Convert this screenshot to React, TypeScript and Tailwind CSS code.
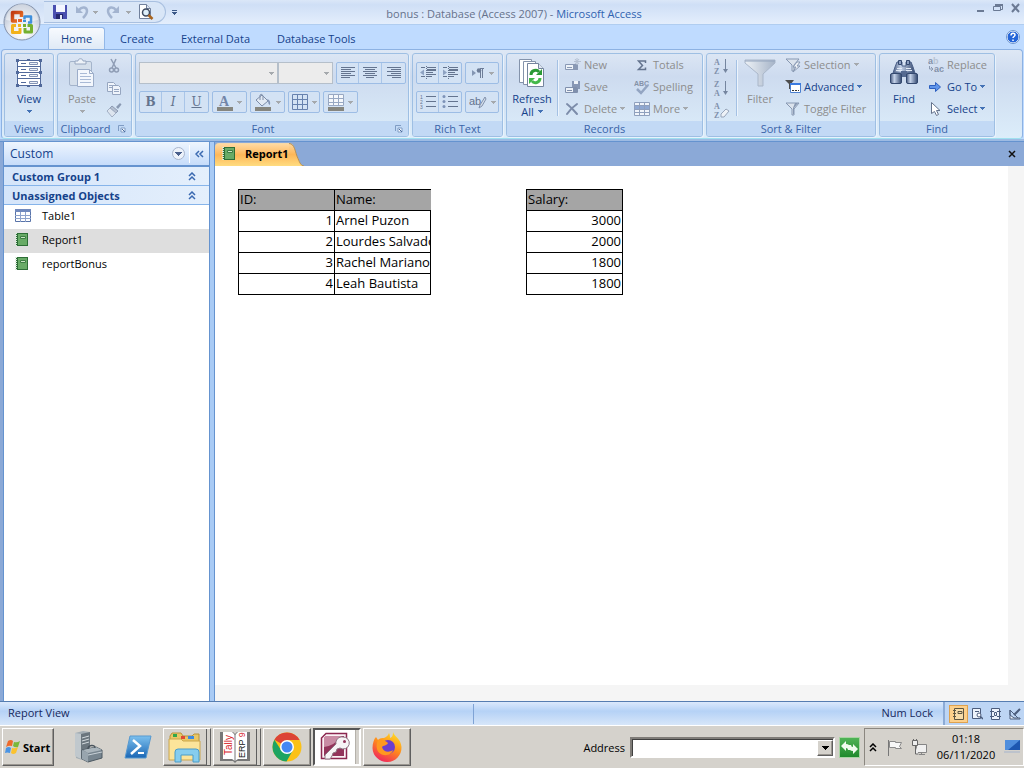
import React from 'react';
import clsx from 'clsx';

type IconProps = { className?: string };

const Caret: React.FC<IconProps> = ({ className = 'text-[#a5a9ad]' }) => (
    <svg width="5" height="3" viewBox="0 0 5 3" className={clsx('shrink-0', className)}>
        <path d="M0 0h5v1H4v1H3v1H2V2H1V1H0z" fill="currentColor" />
    </svg>
);

const WideCaret: React.FC<IconProps> = ({ className }) => (
    <svg width="7" height="4" viewBox="0 0 7 4" className={className}>
        <path d="M0 0h7v1H6v1H5v1H4v1H3V3H2V2H1V1H0z" fill="currentColor" />
    </svg>
);

/* ---------- Quick access icons ---------- */

const OfficeOrb = () => (
    <svg width="38" height="38" viewBox="0 0 38 38">
        <defs>
            <radialGradient id="orb" cx=".5" cy=".8" r=".8">
                <stop offset="0" stopColor="#ffffff" />
                <stop offset=".5" stopColor="#e2e6ee" />
                <stop offset="1" stopColor="#a3afc3" />
            </radialGradient>
            <linearGradient id="orbRed" x2="1" y2="1">
                <stop offset="0" stopColor="#c03a12" />
                <stop offset="1" stopColor="#f07a2a" />
            </linearGradient>
        </defs>
        <circle cx="19" cy="19" r="18" fill="url(#orb)" stroke="#8492ab" />
        <path d="M3 17a16 16 0 0 1 32 0q-16 4-32 0z" fill="#fff" opacity=".45" />
        <g fill="none" strokeLinejoin="round">
            <path d="M14 18H9.500V9.500h9V14" stroke="url(#orbRed)" strokeWidth="3.500" />
            <path d="M21.500 16.500v-3h6.500v6h-3" stroke="#3f8fdc" strokeWidth="2.500" />
            <path d="M13 22.500H9.500v7h7.500V25" stroke="#f2b21c" strokeWidth="3" />
            <path d="M24.500 22.500h4v6.500h-6.500V25" stroke="#74b030" strokeWidth="3" />
        </g>
        <path d="M15 16h4v3h-4z" fill="#e8642a" />
        <path d="M20 17h3v2h-3z" fill="#3f8fdc" />
        <path d="M15 21h3v3h-3z" fill="#f2b21c" />
        <path d="M20 21h3v3h-3z" fill="#74b030" />
    </svg>
);

const SaveDisk = () => (
    <svg width="14" height="14" viewBox="0 0 14 14">
        <path d="M0 0h14v14H1l-1-1z" fill="#4a4fb0" />
        <path d="M3 0h9v7H3z" fill="#f4f6ff" />
        <path d="M3 9h7v5H3z" fill="#25286e" />
        <path d="M7 10h2v4H7z" fill="#e8eaf8" />
    </svg>
);

const Undo: React.FC<IconProps> = ({ className }) => (
    <svg width="14" height="14" viewBox="0 0 14 14" className={className}>
        <path d="M1 1v7h7z" fill="#a3b4d0" />
        <path d="M4 5c3-4 8-3 8 1 0 3-2 5-4 7" fill="none" stroke="#a3b4d0" strokeWidth="2.500" />
    </svg>
);

const PrintPreview = () => (
    <svg width="16" height="16" viewBox="0 0 16 16">
        <path d="M1.500.500h7l4 4v10h-11z" fill="#fff" stroke="#70809c" />
        <path d="M8.500.500v4h4" fill="#dce4f0" stroke="#70809c" />
        <circle cx="8" cy="8.500" r="3.500" fill="#dff0fa" stroke="#3e4a60" strokeWidth="1.500" />
        <path d="M10.500 11l4 4" stroke="#a8641e" strokeWidth="2.500" />
    </svg>
);

/* ---------- Ribbon icons ---------- */

const ViewIcon = () => (
    <svg width="26" height="28" viewBox="0 0 26 28">
        <path d="M1.500 1.500h23v25h-23z" fill="#fff" stroke="#51699a" />
        <path d="M1 7.500h24M1 13.500h24M1 19.500h24" stroke="#51699a" />
        <path d="M5 4.500h5M5 10.500h5M5 16.500h5M5 23.500h5" stroke="#51699a" />
        <path d="M13.500 3.500h8v2h-8zM13.500 9.500h8v2h-8zM13.500 15.500h8v2h-8zM13.500 22.500h8v2h-8z" fill="#eef3fa" stroke="#8393b4" />
        <path d="M0 0h3v3H0zM11 0h3v2h-3zM23 0h3v3h-3zM0 12h3v3H0zM23 12h3v3h-3zM0 25h3v3H0zM11 26h3v2h-3zM23 25h3v3h-3z" fill="#51699a" />
    </svg>
);

const PasteIcon = () => (
    <svg width="28" height="30" viewBox="0 0 28 30">
        <rect x="1.500" y="3.500" width="22" height="24" rx="1.500" fill="#d5dfeb" stroke="#a4b4cb" />
        <path d="M7 6V3h3c0-3 5-3 5 0h3v3z" fill="#edf2f8" stroke="#96a6bf" />
        <path d="M9.500 11.500h12l4 4v13h-16z" fill="#f3f7fd" stroke="#9cadc9" />
        <path d="M12 15.500h7M12 18.500h11M12 21.500h11M12 24.500h11" stroke="#a9bad6" />
        <path d="M21.500 11.500v4h4" fill="none" stroke="#9cadc9" />
    </svg>
);

const CutIcon = () => (
    <svg width="16" height="16" viewBox="0 0 16 16" fill="none" stroke="#8f9db5" strokeWidth="1.500">
        <path d="M5 1l5 9M10 1L6 10" />
        <circle cx="5.500" cy="12" r="2" />
        <circle cx="10.500" cy="12" r="2" />
    </svg>
);

const CopyIcon = () => (
    <svg width="16" height="16" viewBox="0 0 16 16" fill="#eff4fb" stroke="#96a6c0">
        <path d="M1.500 2.500h6l2 2v7h-8z" />
        <path d="M3 5.500h4M3 7.500h4" />
        <path d="M6.500 5.500h6l2 2v7h-8z" />
        <path d="M8 9.500h5M8 11.500h5" />
    </svg>
);

const BrushIcon = () => (
    <svg width="16" height="16" viewBox="0 0 16 16">
        <path d="M10 5l4-4 1.500 1.500L12 7z" fill="#8999b2" />
        <path d="M6 4l6 5-2 2-6-5z" fill="#b5c0d1" stroke="#8d9bb3" />
        <path d="M4 6l6 5-4 4-5-6z" fill="#dde5ef" stroke="#a2afc4" />
    </svg>
);

const lineSets = {
    left: 'M1 1.500h14M1 3.500h10M1 5.500h14M1 7.500h10M1 9.500h14M1 11.500h9',
    center: 'M1 1.500h14M3 3.500h10M1 5.500h14M3 7.500h10M1 9.500h14M4 11.500h8',
    right: 'M1 1.500h14M5 3.500h10M1 5.500h14M5 7.500h10M1 9.500h14M6 11.500h9',
};

const AlignIcon: React.FC<{ side: keyof typeof lineSets }> = ({ side }) => (
    <svg width="16" height="14" viewBox="0 0 16 14">
        <path d={lineSets[side]} stroke="#64748f" />
    </svg>
);

const IndentIcon: React.FC<{ out?: boolean }> = ({ out }) => (
    <svg width="16" height="14" viewBox="0 0 16 14">
        <path d="M1 1.500h4M7 1.500h9M7 3.500h9M7 4.500h9M7 6.500h6M7 8.500h9M1 10.500h4M7 10.500h5" stroke="#64748f" />
        <path d="M6.500 0v14" stroke="#64748f" strokeDasharray="1 1" />
        <path d={out ? 'M0 6.500l4-3v6z' : 'M5 6.500l-4-3v6z'} fill="#8ea2c2" />
    </svg>
);

const ListIcon: React.FC<{ numbered?: boolean }> = ({ numbered }) => (
    <svg width="16" height="16" viewBox="0 0 16 16">
        {[2, 7, 12].map((y, i) =>
            numbered ? (
                <text key={y} x="0" y={y + 3} fontSize="5" fontFamily="Liberation Sans" fill="#64748f">{i + 1}</text>
            ) : (
                <circle key={y} cx="2" cy={y + 0.5} r="1.500" fill="#7d92b8" />
            )
        )}
        <path d="M6 2.500h10M6 7.500h10M6 12.500h10" stroke="#64748f" />
    </svg>
);

const DirectionIcon = () => (
    <svg width="14" height="12" viewBox="0 0 14 12">
        <path d="M1 3l4 3-4 3z" fill="#8496b3" />
        <path d="M13 1.500H9M9.500 1v10M11.500 1v10" stroke="#6d7d98" />
        <circle cx="8" cy="3.500" r="2.300" fill="#6d7d98" />
    </svg>
);

const HighlightIcon = () => (
    <svg width="18" height="16" viewBox="0 0 18 16">
        <text x="0" y="11" fontSize="11" fontFamily="Liberation Sans" fill="#64748f">ab</text>
        <path d="M16 3l-5 8-1 3 3-2 4-7z" fill="#d4deeb" stroke="#8191ac" />
    </svg>
);

const FillIcon = () => (
    <svg width="18" height="18" viewBox="0 0 18 18">
        <path d="M8 2l6 6-6 5-6-6z" fill="#e2eaf4" stroke="#7c8ca8" />
        <path d="M6 7V2q2-2 3 1v4" fill="none" stroke="#7c8ca8" />
        <path d="M13 6q4 1 3 6-2-1-2-4z" fill="#8295b5" />
        <path d="M1 14h16v4H1z" fill="#86867f" />
    </svg>
);

const FontColorIcon = () => (
    <svg width="16" height="18" viewBox="0 0 16 18">
        <text x="2" y="13" fontSize="14" fontWeight="700" fontFamily="Liberation Serif" fill="#7285a8">A</text>
        <path d="M0 14h16v4H0z" fill="#86867f" />
    </svg>
);

const GridIcon = () => (
    <svg width="16" height="16" viewBox="0 0 16 16">
        <path d="M.500.500h15v15H.500zM.500 5.500h15M.500 10.500h15M5.500.500v15M10.500.500v15" fill="none" stroke="#6681ae" />
    </svg>
);

const AltRowIcon = () => (
    <svg width="16" height="18" viewBox="0 0 16 18">
        <path d="M.500 1.500h15v11H.500z" fill="#f5f8fc" stroke="#98a8c3" />
        <path d="M0 5.500h16M0 9.500h16M5.500 1v12M10.500 1v12" stroke="#98a8c3" />
        <path d="M0 14h16v4H0z" fill="#86867f" />
    </svg>
);

const RefreshIcon = () => (
    <svg width="28" height="30" viewBox="0 0 28 30">
        <path d="M1.500 1.500h12v23h-12z" fill="#fff" stroke="#8493ab" />
        <path d="M5.500 3.500h12v23h-12z" fill="#fff" stroke="#8493ab" />
        <path d="M9.500 5.500h11l5 5v18h-16z" fill="#fff" stroke="#75859f" />
        <path d="M20.500 5.500v5h5" fill="#dfe7f1" stroke="#75859f" />
        <path d="M13 17c0-5 6-6 8-3" fill="none" stroke="#2a9a35" strokeWidth="3" />
        <path d="M24 11v6h-6z" fill="#2a9a35" />
        <path d="M22 20c0 5-6 6-8 3" fill="none" stroke="#43b84a" strokeWidth="3" />
        <path d="M11 26v-6h6z" fill="#43b84a" />
    </svg>
);

const NewIcon = () => (
    <svg width="16" height="16" viewBox="0 0 16 16">
        <path d="M.500 7.500h12v5H.500z" fill="#edf2f8" stroke="#8999b5" />
        <path d="M2 10.500h5" stroke="#8999b5" />
        <path d="M8 8h5v5H8z" fill="#8999b5" />
        <path d="M12 1v7M9 4.500h7M10 2l4 5M14 2l-4 5" stroke="#b4c0d2" />
    </svg>
);

const SaveRecordIcon = () => (
    <svg width="16" height="16" viewBox="0 0 16 16">
        <path d="M7 2h8v8H7z" fill="#8797b5" />
        <path d="M9 2h4v3H9z" fill="#eef3f9" />
        <path d="M.500 8.500h12v5H.500z" fill="#edf2f8" stroke="#8090ad" />
        <path d="M2 11.500h5" stroke="#8090ad" />
        <path d="M8 9h4v4H8z" fill="#8090ad" />
    </svg>
);

const DeleteIcon = () => (
    <svg width="16" height="16" viewBox="0 0 16 16">
        <path d="M2 3q5 4 10 10M12 3Q6 7 2 13" fill="none" stroke="#7d8daa" strokeWidth="2" strokeLinecap="round" />
    </svg>
);

const SigmaIcon = () => (
    <svg width="16" height="16" viewBox="0 0 16 16">
        <path d="M11.500 6V4H4.500L8.500 8.500l-4 4h7v-2" fill="none" stroke="#64748f" strokeWidth="1.500" />
    </svg>
);

const SpellingIcon = () => (
    <svg width="16" height="16" viewBox="0 0 16 16">
        <text x="0" y="7" fontSize="7" fontWeight="700" fontFamily="Liberation Sans" fill="#8592a8">ABC</text>
        <path d="M3 10l4 4 7-8" fill="none" stroke="#93a5c2" strokeWidth="2.500" />
    </svg>
);

const MoreIcon = () => (
    <svg width="16" height="16" viewBox="0 0 16 16">
        <path d="M.500 1.500h15v13H.500z" fill="#f0f4fa" stroke="#8fa0bd" />
        <path d="M1 5h14v3H1z" fill="#8fa8d2" />
        <path d="M0 4.500h16M0 8.500h16M0 11.500h16M5.500 1v13M10.500 1v13" stroke="#8fa0bd" />
    </svg>
);

const SortIcon: React.FC<{ top: string; bottom: string; clear?: boolean }> = ({ top, bottom, clear }) => (
    <svg width="17" height="20" viewBox="0 0 17 20">
        <g fontSize="8" fontWeight="700" fontFamily="Liberation Serif" fill="#8090ab">
            <text x="1" y="9">{top}</text>
            <text x="1" y="18">{bottom}</text>
        </g>
        {clear ? (
            <path d="M8 14l5-5 3 2-5 6H8z" fill="#eef2f7" stroke="#98a5ba" />
        ) : (
            <>
                <path d="M12.500 3v12" stroke="#75859f" />
                <path d="M10 13h5l-2.500 4z" fill="#75859f" />
            </>
        )}
    </svg>
);

const BigFilterIcon = () => (
    <svg width="32" height="28" viewBox="0 0 32 28">
        <defs>
            <linearGradient id="funnel">
                <stop offset="0" stopColor="#edf1f6" />
                <stop offset="1" stopColor="#a6b4c8" />
            </linearGradient>
        </defs>
        <path d="M1 1h30v3L19 15v12h-5V15L1 4z" fill="url(#funnel)" stroke="#a9b6c9" />
        <path d="M1 2h30" stroke="#94a5be" />
    </svg>
);

const SmallFilterIcon: React.FC<{ variant: 'bolt' | 'form' | 'plain' }> = ({ variant }) => (
    <svg width="16" height="16" viewBox="0 0 16 16">
        {variant === 'form' ? (
            <>
                <path d="M0 1h9L6 5v5H4V5z" fill="#4d4d4d" />
                <path d="M5.500 4.500h10v9h-10z" fill="#fff" stroke="#4a7fd0" />
                <path d="M5 4h11v2H5z" fill="#3a7ae0" />
                <path d="M7 11h2v1H7zM10 11h2v1h-2zM13 11h1v1h-1z" fill="#333" />
            </>
        ) : (
            <path d="M1 2h13L9 8v6H7V8z" fill="#dbe3ed" stroke="#8798b2" />
        )}
        {variant === 'plain' && <path d="M9 7l4-5h-3L8 7v6h1z" fill="#8798b2" />}
        {variant === 'bolt' && <path d="M12 5l-4 5h3l-3 5 7-6h-3l3-4z" fill="#f2f5f9" stroke="#8798b2" />}
    </svg>
);

const BinocularsIcon = () => (
    <svg width="28" height="28" viewBox="0 0 28 28">
        <defs>
            <linearGradient id="lens">
                <stop offset="0" stopColor="#46597f" />
                <stop offset=".35" stopColor="#c5d3ea" />
                <stop offset="1" stopColor="#33486f" />
            </linearGradient>
        </defs>
        <path d="M7 3h5v4h4V3h5l2 5 2 6H3l2-6z" fill="url(#lens)" stroke="#4b6089" />
        <path d="M8.500 1.500h3v4h-3zM16.500 1.500h3v4h-3z" fill="#8b9ec0" stroke="#33486f" />
        <path d="M11 12h6v6h-6z" fill="#556a91" />
        <path d="M7 9.500h5M16 9.500h5M6 11.500h6M16 11.500h6" stroke="#e2eaf6" />
        <rect x=".5" y="14.500" width="11" height="10" rx="1.500" fill="url(#lens)" stroke="#33486f" />
        <rect x="16.500" y="14.500" width="11" height="10" rx="1.500" fill="url(#lens)" stroke="#33486f" />
    </svg>
);

const ReplaceIcon = () => (
    <svg width="16" height="18" viewBox="0 0 16 18">
        <g fontSize="9" fontWeight="700" fontFamily="Liberation Sans">
            <text x="0" y="8" fill="#8391a9">a<tspan fill="#b9c3d2">b</tspan></text>
            <text x="6" y="16" fill="#8391a9">ac</text>
        </g>
        <path d="M1.500 10v3h3M3 11l2 2-2 2" fill="none" stroke="#8d9bb2" />
    </svg>
);

const GoToIcon = () => (
    <svg width="14" height="16" viewBox="0 0 14 16">
        <path d="M1.500 6.500h6v-3L12.500 8l-5 4.500v-3h-6z" fill="#5e94ea" stroke="#2c5fc0" />
    </svg>
);

const CursorIcon = () => (
    <svg width="14" height="16" viewBox="0 0 14 16">
        <path d="M3.500 1.500v11l3-2 2 4 2-1-2-4h3.500z" fill="#fff" stroke="#65738c" />
    </svg>
);

const LauncherIcon = () => (
    <svg width="8" height="8" viewBox="0 0 8 8">
        <path d="M.500 6V.500H6" fill="none" stroke="#7f9cc4" />
        <path d="M3 3h4v4H3z" fill="#f5f9fe" stroke="#7f9cc4" />
        <path d="M4 4l3 3" stroke="#4b6c9f" />
    </svg>
);

/* ---------- Navigation icons ---------- */

const TableIcon = () => (
    <svg width="16" height="13" viewBox="0 0 16 13">
        <path d="M.500.500h15v12H.500z" fill="#fff" stroke="#5873a8" />
        <path d="M0 0h16v3H0z" fill="#7089bd" />
        <path d="M0 6.500h16M0 9.500h16M5.500 3v10M10.500 3v10" stroke="#8ea3cc" />
    </svg>
);

const ReportIcon = () => (
    <svg width="13" height="13" viewBox="0 0 13 13">
        <path d="M1 0h12v13H1z" fill="#2d6e36" />
        <path d="M3 1h9v11H3z" fill="#68ab66" />
        <path d="M5.500 3.500h5v2h-5z" fill="#c9e6c3" stroke="#3c7d42" />
        <path d="M1 0v13" stroke="#dbe9db" strokeWidth="2" strokeDasharray="1 1" />
    </svg>
);

const Chevrons = () => (
    <svg width="8" height="9" viewBox="0 0 8 9">
        <path d="M1 4l3-3 3 3M1 8l3-3 3 3" fill="none" stroke="#3a69b0" strokeWidth="1.500" />
    </svg>
);

/* ---------- Ribbon pieces ---------- */

const Group: React.FC<{ title: string; width: string; launcher?: boolean; children: React.ReactNode }> = ({
    title,
    width,
    launcher,
    children,
}) => (
    <section
        className={clsx(
            'flex h-[84px] shrink-0 flex-col overflow-hidden rounded-[3px] border border-[#9ebfe3] shadow-[1px_1px_0_#e8f2fc]',
            width
        )}
    >
        <div className="flex h-[67px] items-center">{children}</div>
        <div className="flex h-[15px] items-center bg-[#c2d9f5] text-[#3a64a8]">
            <h2 className="grow text-center">{title}</h2>
            {launcher && (
                <button type="button" aria-label={`${title} options`} className="flex w-[18px] shrink-0 justify-center">
                    <LauncherIcon />
                </button>
            )}
        </div>
    </section>
);

const Cluster: React.FC<{ children: React.ReactNode }> = ({ children }) => (
    <div className="flex h-[22px] divide-x divide-[#a9c5e8] rounded-[2px] border border-[#9dbde5] bg-[#d3e2f4]">
        {children}
    </div>
);

const Tool: React.FC<{ label: string; caret?: boolean; wide?: string; children: React.ReactNode }> = ({
    label,
    caret,
    wide = 'w-[22px]',
    children,
}) => (
    <button type="button" aria-label={label} className={clsx('flex items-center justify-center gap-1', wide)}>
        {children}
        {caret && <Caret />}
    </button>
);

const BigButton: React.FC<{
    icon: React.ReactNode;
    label: string;
    width: string;
    disabled?: boolean;
    caret?: boolean;
    second?: string;
}> = ({ icon, label, width, disabled, caret, second }) => (
    <button
        type="button"
        disabled={disabled}
        className={clsx('flex h-[66px] shrink-0 flex-col items-center', width, disabled ? 'text-[#8d8d8d]' : 'text-[#15428b]')}
    >
        <span className="flex h-[37px] items-center">{icon}</span>
        <span className="leading-[14px]">{label}</span>
        {(caret || second) && (
            <span className="flex h-[12px] items-center gap-1 leading-[12px]">
                {second}
                <Caret className={disabled ? 'text-[#a5a9ad]' : 'text-[#4472b5]'} />
            </span>
        )}
    </button>
);

const SmallButton: React.FC<{ icon: React.ReactNode; label: string; disabled?: boolean; caret?: boolean }> = ({
    icon,
    label,
    disabled,
    caret,
}) => (
    <button
        type="button"
        disabled={disabled}
        className={clsx('flex h-[22px] items-center gap-[3px] pb-[2px] whitespace-nowrap', disabled ? 'text-[#8d8d8d]' : 'text-[#15428b]')}
    >
        {icon}
        <span>{label}</span>
        {caret && <Caret className={disabled ? 'text-[#a5a9ad]' : 'text-[#4472b5]'} />}
    </button>
);

const Combo: React.FC<{ label: string; width: string }> = ({ label, width }) => (
    <div className={clsx('grid h-[22px] items-center', width)}>
        <select
            disabled
            aria-label={label}
            className="col-start-1 row-start-1 h-full w-full appearance-none border border-[#b5bfca] bg-[#ececec]"
        />
        <Caret className="col-start-1 row-start-1 mr-1 justify-self-end text-[#a5a9ad]" />
    </div>
);

const Rule = () => <div className="h-[56px] w-px shrink-0 bg-[#a4c1e4] shadow-[1px_0_0_#edf4fc]" />;

const Ribbon = () => (
    <div className="mx-px flex h-[90px] gap-[3px] overflow-hidden rounded-[4px] border border-[#8db2e3] border-b-[#9fe0ef] bg-linear-to-b from-[#dee8f5] via-[#cddbef] via-30% to-[#dcedfa] px-[2px] pt-[3px]">
        <Group title="Views" width="w-[50px]">
            <BigButton icon={<ViewIcon />} label="View" width="w-[48px]" caret />
        </Group>

        <Group title="Clipboard" width="w-[75px]" launcher>
            <BigButton icon={<PasteIcon />} label="Paste" width="w-[48px]" caret disabled />
            <div className="flex flex-col">
                <button type="button" aria-label="Cut" className="flex h-[22px] items-center"><CutIcon /></button>
                <button type="button" aria-label="Copy" className="flex h-[22px] items-center"><CopyIcon /></button>
                <button type="button" aria-label="Format painter" className="flex h-[22px] items-center"><BrushIcon /></button>
            </div>
        </Group>

        <Group title="Font" width="w-[274px]" launcher>
            <div className="flex flex-col gap-[7px] px-[3px]">
                <div className="flex">
                    <Combo label="Font" width="w-[139px]" />
                    <Combo label="Font size" width="w-[55px]" />
                    <div className="ml-[3px]">
                        <Cluster>
                            <Tool label="Align left"><AlignIcon side="left" /></Tool>
                            <Tool label="Center" wide="w-[23px]"><AlignIcon side="center" /></Tool>
                            <Tool label="Align right" wide="w-[23px]"><AlignIcon side="right" /></Tool>
                        </Cluster>
                    </div>
                </div>
                <div className="flex gap-[3px] font-[DejaVu_Serif,serif] text-[12px] text-[#64748f]">
                    <Cluster>
                        <Tool label="Bold"><b>B</b></Tool>
                        <Tool label="Italic" wide="w-[23px]"><i>I</i></Tool>
                        <Tool label="Underline" wide="w-[23px]"><u>U</u></Tool>
                    </Cluster>
                    <Cluster><Tool label="Font color" caret wide="w-[33px]"><FontColorIcon /></Tool></Cluster>
                    <Cluster><Tool label="Fill color" caret wide="w-[33px]"><FillIcon /></Tool></Cluster>
                    <Cluster><Tool label="Gridlines" caret wide="w-[30px]"><GridIcon /></Tool></Cluster>
                    <Cluster><Tool label="Alternate row color" caret wide="w-[33px]"><AltRowIcon /></Tool></Cluster>
                </div>
            </div>
        </Group>

        <Group title="Rich Text" width="w-[91px]">
            <div className="flex flex-col gap-[7px] px-[3px]">
                <div className="flex gap-[3px]">
                    <Cluster>
                        <Tool label="Decrease indent"><IndentIcon out /></Tool>
                        <Tool label="Increase indent"><IndentIcon /></Tool>
                    </Cluster>
                    <Cluster><Tool label="Text direction" caret wide="w-[32px]"><DirectionIcon /></Tool></Cluster>
                </div>
                <div className="flex gap-[3px]">
                    <Cluster>
                        <Tool label="Numbering"><ListIcon numbered /></Tool>
                        <Tool label="Bullets"><ListIcon /></Tool>
                    </Cluster>
                    <Cluster><Tool label="Highlight" caret wide="w-[32px]"><HighlightIcon /></Tool></Cluster>
                </div>
            </div>
        </Group>

        <Group title="Records" width="w-[197px]">
            <BigButton icon={<RefreshIcon />} label="Refresh" second="All" width="w-[50px]" />
            <Rule />
            <div className="ml-[7px] w-[69px] shrink-0">
                <SmallButton icon={<NewIcon />} label="New" disabled />
                <SmallButton icon={<SaveRecordIcon />} label="Save" disabled />
                <SmallButton icon={<DeleteIcon />} label="Delete" disabled caret />
            </div>
            <div>
                <SmallButton icon={<SigmaIcon />} label="Totals" disabled />
                <SmallButton icon={<SpellingIcon />} label="Spelling" disabled />
                <SmallButton icon={<MoreIcon />} label="More" disabled caret />
            </div>
        </Group>

        <Group title="Sort & Filter" width="w-[170px]">
            <div className="flex w-[29px] shrink-0 flex-col pl-[6px]">
                <button type="button" aria-label="Ascending" className="flex h-[22px] items-center"><SortIcon top="A" bottom="Z" /></button>
                <button type="button" aria-label="Descending" className="flex h-[22px] items-center"><SortIcon top="Z" bottom="A" /></button>
                <button type="button" aria-label="Clear all sorts" className="flex h-[22px] items-center"><SortIcon top="A" bottom="Z" clear /></button>
            </div>
            <Rule />
            <BigButton icon={<BigFilterIcon />} label="Filter" width="w-[46px]" disabled />
            <div className="ml-[2px]">
                <SmallButton icon={<SmallFilterIcon variant="bolt" />} label="Selection" disabled caret />
                <SmallButton icon={<SmallFilterIcon variant="form" />} label="Advanced" caret />
                <SmallButton icon={<SmallFilterIcon variant="plain" />} label="Toggle Filter" disabled />
            </div>
        </Group>

        <Group title="Find" width="w-[116px]">
            <BigButton icon={<BinocularsIcon />} label="Find" width="w-[48px]" />
            <div>
                <SmallButton icon={<ReplaceIcon />} label="Replace" disabled />
                <SmallButton icon={<span className="w-4"><GoToIcon /></span>} label="Go To" caret />
                <SmallButton icon={<span className="w-4"><CursorIcon /></span>} label="Select" caret />
            </div>
        </Group>
    </div>
);

/* ---------- Title and tabs ---------- */

const TitleBar = () => (
    <header className="grid h-[25px] grid-cols-[1fr_auto_1fr] items-center border-b border-[#b0cdf0] bg-linear-to-b from-[#dbe7f8] via-[#cfdff6] via-20% to-[#e4eefc] text-[#66728c]">
        <div className="flex items-center">
            <div className="ml-[44px] flex h-[22px] w-[122px] items-center rounded-r-full border border-l-0 border-[#a9c0e0] bg-[#d9e6f7] pl-[9px]">
                <button type="button" aria-label="Save" className="mr-2"><SaveDisk /></button>
                <button type="button" aria-label="Undo" className="mr-1 flex items-center gap-1"><Undo /><Caret /></button>
                <button type="button" aria-label="Redo" className="ml-1 flex items-center gap-[6px]"><Undo className="-scale-x-100" /><Caret /></button>
                <button type="button" aria-label="Print preview" className="ml-[7px]"><PrintPreview /></button>
            </div>
            <button type="button" aria-label="Customize quick access toolbar" className="ml-[6px] flex flex-col items-center gap-px">
                <span className="h-px w-[5px] bg-[#3b5888]" />
                <Caret className="text-[#3b5888]" />
            </button>
        </div>
        <h1 className="pt-[2px] pl-1">bonus : Database (Access 2007) - <span className="text-[#2f62b0]">Microsoft Access</span></h1>
        <div className="flex items-center justify-end gap-2 pr-1 pb-2">
            <button type="button" aria-label="Minimize">
                <svg width="9" height="10" viewBox="0 0 9 10"><path d="M1 8h7" stroke="#6b7a94" strokeWidth="2" /></svg>
            </button>
            <button type="button" aria-label="Restore">
                <svg width="10" height="10" viewBox="0 0 10 10"><path d="M2.500 3V1.500h7v5H8M.500 3.500h7v4h-7z" fill="none" stroke="#6b7a94" /><path d="M2 1h8v2H2z" fill="#6b7a94" /></svg>
            </button>
            <button type="button" aria-label="Close">
                <svg width="9" height="10" viewBox="0 0 9 10"><path d="M1 1l7 8M8 1L1 9" stroke="#6b7a94" strokeWidth="2" /></svg>
            </button>
        </div>
    </header>
);

const RibbonTabs = () => (
    <nav className="flex h-[24px] items-end gap-[3px] pr-1 pl-[48px] text-[#15428b]">
        {['Home', 'Create', 'External Data', 'Database Tools'].map((tab, i) => (
            <button
                key={tab}
                type="button"
                className={clsx('h-[22px] px-3', i === 0 && 'rounded-t-[3px] border border-b-0 border-[#93b8e8] bg-linear-to-b from-[#f7fafe] to-[#e0eaf6]')}
            >
                {tab}
            </button>
        ))}
        <button type="button" aria-label="Help" className="mb-[5px] ml-auto">
            <svg width="14" height="14" viewBox="0 0 14 14">
                <circle cx="7" cy="7" r="6" fill="#2565d8" stroke="#fff" />
                <circle cx="7" cy="7" r="6.500" fill="none" stroke="#6d95cf" />
                <path d="M5 5.500c0-3 4-3 4-.500 0 1.500-2 1.500-2 3M7 9.500V11" fill="none" stroke="#fff" strokeWidth="1.500" />
            </svg>
        </button>
    </nav>
);

/* ---------- Workspace ---------- */

const objects = [
    { name: 'Table1', icon: <TableIcon /> },
    { name: 'Report1', icon: <ReportIcon />, selected: true },
    { name: 'reportBonus', icon: <ReportIcon /> },
];

const NavPane = () => (
    <aside className="w-[205px] shrink-0 bg-white">
        <div className="flex h-[25px] items-center border-b-2 border-[#6593cf] bg-linear-to-b from-[#eef5fe] to-[#c6dcfa] pl-[6px] text-[12px] text-[#15428b]">
            <span className="grow">Custom</span>
            <button type="button" aria-label="Choose category" className="mr-1 flex size-[13px] items-center justify-center rounded-full border border-[#a8b5cd] bg-[#edf2fa]">
                <WideCaret className="text-[#4a5f8c]" />
            </button>
            <button type="button" aria-label="Collapse pane" className="flex h-[18px] w-[20px] items-center justify-center border-l border-white">
                <svg width="9" height="8" viewBox="0 0 9 8"><path d="M4 1L1 4l3 3M8 1L5 4l3 3" fill="none" stroke="#3a69b0" strokeWidth="1.500" /></svg>
            </button>
        </div>
        {['Custom Group 1', 'Unassigned Objects'].map((title) => (
            <button
                key={title}
                type="button"
                className="flex h-[19px] w-full items-center justify-between border-b border-[#86b4ea] bg-linear-to-r from-[#d5e5fa] to-[#e4effc] pr-[13px] pl-2 font-bold text-[#15428b]"
            >
                {title}
                <Chevrons />
            </button>
        ))}
        <ul>
            {objects.map((o) => (
                <li key={o.name}>
                    <button
                        type="button"
                        className={clsx('flex h-[24px] w-full items-center pb-1 pl-[11px] text-black', o.selected && 'bg-[#dedede]')}
                    >
                        <span className="w-[27px]">{o.icon}</span>
                        {o.name}
                    </button>
                </li>
            ))}
        </ul>
    </aside>
);

const rows = [
    { id: 1, name: 'Arnel Puzon', salary: 3000 },
    { id: 2, name: 'Lourdes Salvador', salary: 2000 },
    { id: 3, name: 'Rachel Mariano', salary: 1800 },
    { id: 4, name: 'Leah Bautista', salary: 1800 },
];

const ReportTable = () => (
    <table className="w-[385px] table-fixed border-collapse text-[13px] leading-[18px] text-black">
        <thead>
            <tr className="h-[21px] text-left align-top">
                <th className="border border-black bg-[#a5a5a5] p-0 pl-px font-normal">ID:</th>
                <th className="border border-r-0 border-black bg-[#a5a5a5] p-0 pl-px font-normal">Name:</th>
                <td />
                <th className="border border-black bg-[#a5a5a5] p-0 pl-px font-normal">Salary:</th>
            </tr>
        </thead>
        <tbody>
            {rows.map((r) => (
                <tr key={r.id} className="h-[21px] align-top">
                    <td className="border border-black p-0 pr-px text-right">{r.id}</td>
                    <td className="overflow-hidden border border-black p-0 pl-px whitespace-nowrap">{r.name}</td>
                    <td />
                    <td className="border border-black p-0 pr-px text-right">{r.salary}</td>
                </tr>
            ))}
        </tbody>
    </table>
);

const Document = () => (
    <main className="flex grow flex-col">
        <div className="flex h-[24px] items-end justify-between bg-[#8ba9d7] pr-2">
            <button type="button" className="flex h-[23px] items-stretch">
                <span className="flex items-center gap-[10px] rounded-tl-[4px] border-t border-[#f6d9a8] bg-linear-to-b from-[#ffd9a0] via-[#fdb759] to-[#ffdc80] pb-[3px] pl-[7px] font-bold text-black">
                    <ReportIcon />
                    Report1
                </span>
                <svg width="15" height="23" viewBox="0 0 15 23">
                    <defs>
                        <linearGradient id="tab" x2="0" y2="1">
                            <stop offset="0" stopColor="#ffd9a0" />
                            <stop offset=".5" stopColor="#fdb759" />
                            <stop offset="1" stopColor="#ffdc80" />
                        </linearGradient>
                    </defs>
                    <path d="M0 0c6 0 6 9 9 15 2 5 3 7 6 8H0z" fill="url(#tab)" />
                    <path d="M0 .500c6 0 6 9 9 15 2 5 3 7 6 7.500" fill="none" stroke="#b08f5c" />
                </svg>
            </button>
            <button type="button" aria-label="Close report" className="mb-2">
                <svg width="8" height="8" viewBox="0 0 8 8"><path d="M1 1l6 6M7 1L1 7" stroke="#111" strokeWidth="1.500" /></svg>
            </button>
        </div>
        <div className="flex grow bg-[#f5f5f5] pr-4 pb-4">
            <div className="grow bg-white pt-[23px] pl-[23px]">
                <ReportTable />
            </div>
        </div>
    </main>
);

const StatusBar = () => (
    <footer className="flex h-[24px] items-center border-t border-[#567db1] bg-linear-to-b from-[#dbe9fc] via-[#b5d2f6] via-40% to-[#d7e6f9] text-[#15285c]">
        <span className="w-[474px] border-r border-[#7fa3d5] pb-[2px] pl-2 leading-[18px]">Report View</span>
        <span className="grow pr-[10px] pb-[2px] text-right">Num Lock</span>
        <div className="flex h-full items-center gap-px border-l-2 border-[#8cabd6] bg-[#bdd5f4] pl-1">
            <button type="button" aria-label="Report view" className="flex h-[18px] w-[19px] items-center justify-center border border-[#dfa24f] bg-[#fdd08a]">
                <svg width="11" height="12" viewBox="0 0 11 12"><path d="M1.500.500h9v11h-9z" fill="#f7dca8" stroke="#5d5540" /><path d="M0 2.500h3M0 5.500h3M0 8.500h3M5 3.500h4v2H5z" fill="none" stroke="#5d5540" /></svg>
            </button>
            <button type="button" aria-label="Print preview" className="flex w-[17px] justify-center">
                <svg width="11" height="12" viewBox="0 0 11 12"><path d="M.500.500h8v10h-8zM3 3.500h4" fill="#edf3fb" stroke="#4b5c7c" /><circle cx="7" cy="7" r="2" fill="#fff" stroke="#4b5c7c" /><path d="M8.500 8.500L11 11" stroke="#4b5c7c" strokeWidth="1.500" /></svg>
            </button>
            <button type="button" aria-label="Layout view" className="flex w-[17px] justify-center">
                <svg width="11" height="12" viewBox="0 0 11 12"><path d="M1.500.500h8v11h-8z" fill="#edf3fb" stroke="#4b5c7c" /><path d="M0 3.500h4M7 3.500h4M0 8.500h4M7 8.500h4M4.500 4.500h2v3h-2z" fill="none" stroke="#4b5c7c" /></svg>
            </button>
            <button type="button" aria-label="Design view" className="flex w-[19px] justify-center">
                <svg width="12" height="12" viewBox="0 0 12 12"><path d="M1 2v5l4 3h6v1H1z" fill="#edf3fb" stroke="#4b5c7c" /><path d="M1 2l8 8" stroke="#4b5c7c" /><path d="M5 7l6-6" stroke="#4b5c7c" strokeWidth="2" /></svg>
            </button>
        </div>
    </footer>
);

/* ---------- Taskbar ---------- */

const StartFlag = () => (
    <svg width="17" height="16" viewBox="0 0 17 16">
        <path d="M3 2q3-2 5 0L7 7Q4 6 1 8z" fill="#ee6a2c" />
        <path d="M9 3q3 1 6-1l-2 6q-3 1-5-1z" fill="#7ab83c" />
        <path d="M1 9q3-2 5 0l-1 5q-3-1-5 0z" fill="#4a94e4" />
        <path d="M7 9q3 1 6-1l-2 6q-3 2-5 0z" fill="#fbc22e" />
    </svg>
);

const ServerIcon = () => (
    <svg width="30" height="32" viewBox="0 0 30 32">
        <path d="M2 2l8-2 7 1v20l-8 8-6-2z" fill="#a3adb4" />
        <path d="M8 3l9-2v19l-9 8z" fill="#6b767e" />
        <path d="M2 2l6 1v25l-6-3z" fill="#c0c8cd" />
        <path d="M9 7l7-2M9 10l7-2M9 13l7-2" stroke="#d3dade" />
        <path d="M9 19l14-3 6 3v8l-14 4-6-3z" fill="#77858f" stroke="#4d5962" />
        <path d="M9 19l6 3v9l-6-3z" fill="#98a5ae" />
        <path d="M10 19l13-3 6 3-14 3z" fill="#aab5bc" />
        <path d="M15 24l14-3" stroke="#c8d1d7" />
        <path d="M15 18c0-4 7-5 7-1" fill="none" stroke="#49545d" strokeWidth="1.500" />
    </svg>
);

const PowerShellIcon = () => (
    <svg width="28" height="24" viewBox="0 0 28 24">
        <defs>
            <linearGradient id="ps" x2="0" y2="1">
                <stop offset="0" stopColor="#7cc0ee" />
                <stop offset="1" stopColor="#1a66b4" />
            </linearGradient>
        </defs>
        <path d="M6 1h21l-5 22H1z" fill="url(#ps)" stroke="#5799cf" />
        <path d="M9 5l7 6-9 8" fill="none" stroke="#fff" strokeWidth="2.500" />
        <path d="M14 18h6" stroke="#fff" strokeWidth="2" />
    </svg>
);

const FolderIcon = () => (
    <svg width="34" height="31" viewBox="0 0 34 31">
        <path d="M2 4l2-3h9l2 3h9l2-2h5v25H2z" fill="#e9c766" stroke="#b8923a" />
        <path d="M5 2h4v3H5z" fill="#30a84a" />
        <path d="M13 4h4v3h-4z" fill="#e04a34" />
        <path d="M20 4h6v3h-6z" fill="#3c8ae0" />
        <path d="M1 7h12l2 2h17v19H1z" fill="#fbe49a" stroke="#cba64c" />
        <path d="M7 30V20q0-3 3-3h18q3 0 3 3v10h-6v-7H13v7z" fill="#86cdee" stroke="#4b9cc8" />
    </svg>
);

const TallyIcon = () => (
    <svg width="32" height="34" viewBox="0 0 32 34">
        <path d="M1 2h13l2 2 2-2h13v29H18l-2 2-2-2H1z" fill="#777" />
        <path d="M4 2h9l3 3v26l-3-2H4zM28 2h-9l-3 3v26l3-2h9z" fill="#fff" />
        <path d="M16 4v28" stroke="#777" />
        <g fontFamily="Liberation Sans">
            <text transform="translate(13 25) rotate(-90)" fontSize="10" fill="#d7262c">Tally</text>
            <text transform="translate(26 28) rotate(-90)" fontSize="9" fill="#111">ERP <tspan fill="#d7262c">9</tspan></text>
        </g>
    </svg>
);

const ChromeIcon = () => (
    <svg width="30" height="30" viewBox="0 0 30 30">
        <circle cx="15" cy="15" r="14.500" fill="#fbc116" />
        <path d="M15 15L2.400 7.800A14.500 14.500 0 0 1 27.600 8H15z" fill="#dc4437" />
        <path d="M2.400 7.800A14.500 14.500 0 0 0 14.500 29.500L21 18l-6-3-6 3z" fill="#1da462" />
        <circle cx="15" cy="15" r="7" fill="#fff" />
        <circle cx="15" cy="15" r="5.500" fill="#4587f3" />
    </svg>
);

const AccessIcon = () => (
    <svg width="30" height="30" viewBox="0 0 30 30">
        <path d="M6 1.500h20.500v25h-25V6z" fill="#fbf1f5" stroke="#8c2750" strokeWidth="1.500" />
        <path d="M6 4h18v20H4V6z" fill="#93345b" />
        <path d="M4 15Q14 14 22 4H6L4 6z" fill="#c98ba4" />
        <path d="M23 5a6 6 0 1 1-3 11l-3 1-1 3-3 1-1 3-2 3H5v-4l11-11a6 6 0 0 1 7-7z" fill="#f6f3f5" stroke="#8f7784" />
        <circle cx="24.500" cy="9.500" r="1.500" fill="#93345b" />
    </svg>
);

const FirefoxIcon = () => (
    <svg width="32" height="32" viewBox="0 0 32 32">
        <defs>
            <linearGradient id="fox" x1=".8" x2=".3" y2="1">
                <stop offset="0" stopColor="#ffe226" />
                <stop offset=".5" stopColor="#ff8a1c" />
                <stop offset="1" stopColor="#f0255e" />
            </linearGradient>
        </defs>
        <path d="M22 1c1 4 8 7 8.500 15A14.500 14.500 0 0 1 1.500 17C1.500 12 3 8 5 6l2 3c2-2 4-2 6-2 2-1 4-2 5-5 1 2 1 4 1 5 3-1 3-4 3-6z" fill="url(#fox)" />
        <circle cx="17" cy="16" r="7" fill="#6b3fd0" />
        <path d="M7 9c4-1 8 1 10 3-1 3-5 2-6 4 1 5 7 6 11 3-2 7-14 7-16-1-1-3 0-7 1-9z" fill="#ff9820" />
    </svg>
);

const raised = 'border border-t-white border-l-white border-r-[#5f5f5f] border-b-[#5f5f5f] shadow-[inset_-1px_-1px_0_#9a9690]';

const TaskButton: React.FC<{ label: string; active?: boolean; stacked?: boolean; children: React.ReactNode }> = ({
    label,
    active,
    stacked,
    children,
}) => (
    <button
        type="button"
        aria-label={label}
        className={clsx(
            'flex h-[38px] w-[48px] shrink-0 items-stretch',
            active ? 'border-2 border-t-[#555] border-r-white border-b-white border-l-[#555] bg-white' : raised
        )}
    >
        <span className="flex grow items-center justify-center">{children}</span>
        {(stacked || active) && (
            <span className={clsx('w-1 border-l bg-[#d5d2cc]', active ? 'border-[#b5b1aa]' : 'border-[#5f5f5f]')} />
        )}
    </button>
);

const Taskbar = () => (
    <footer className="flex h-[43px] items-center border-t border-white bg-[#d5d2cc] text-black">
        <button type="button" className={clsx('ml-[2px] flex h-[38px] w-[52px] shrink-0 items-center gap-px pl-[2px] font-bold', raised)}>
            <StartFlag />
            Start
        </button>
        <button type="button" aria-label="Server manager" className="ml-[19px] w-[32px]"><ServerIcon /></button>
        <button type="button" aria-label="PowerShell" className="ml-[19px] w-[28px]"><PowerShellIcon /></button>
        <div className="ml-[11px] flex gap-[2px]">
            <TaskButton label="Explorer" stacked><FolderIcon /></TaskButton>
            <TaskButton label="Tally" stacked><TallyIcon /></TaskButton>
            <TaskButton label="Chrome"><ChromeIcon /></TaskButton>
            <TaskButton label="Access" active><AccessIcon /></TaskButton>
            <TaskButton label="Firefox"><FirefoxIcon /></TaskButton>
        </div>
        <label htmlFor="address" className="ml-auto pr-[5px]">Address</label>
        <div className="flex h-[21px] w-[205px] border-2 border-t-[#7f7c78] border-r-white border-b-white border-l-[#7f7c78] bg-white shadow-[inset_1px_1px_0_#404040]">
            <input id="address" type="text" className="min-w-0 grow px-1 outline-none" />
            <button type="button" aria-label="Address history" className={clsx('mt-px flex w-4 items-center justify-center bg-[#d5d2cc]', raised)}>
                <WideCaret />
            </button>
        </div>
        <button type="button" aria-label="Go" className="mx-1 flex size-[21px] items-center justify-center border border-[#a9d5a4] bg-linear-to-b from-[#4fb356] to-[#1e8a2c]">
            <svg width="17" height="13" viewBox="0 0 17 13">
                <path d="M0 5l5-5v3q4 0 4 4v2H7q0-2-2-2v3z" fill="#f0fbee" />
                <path d="M17 8l-5 5v-3q-4 0-4-4V4h2q0 2 2 2V3z" fill="#f0fbee" />
            </svg>
        </button>
        <div className="flex h-[38px] items-center border border-t-[#8b8780] border-r-white border-b-white border-l-[#8b8780] pr-[3px] pl-1">
            <button type="button" aria-label="Show hidden icons" className="mr-[9px]">
                <svg width="8" height="9" viewBox="0 0 8 9"><path d="M1 4l3-3 3 3M1 8l3-3 3 3" fill="none" stroke="#000" strokeWidth="1.500" /></svg>
            </button>
            <svg width="17" height="17" viewBox="0 0 17 17" className="mr-2">
                <path d="M2.500 1v16" stroke="#777" />
                <path d="M3.500 2.500h6v1h6l-2 4 2 2h-6v-1h-6z" fill="#f7f7f7" stroke="#8a8a8a" />
            </svg>
            <svg width="17" height="17" viewBox="0 0 17 17">
                <path d="M5.500 5.500h10v8h-10zM8 15.500h6M10.500 13v3" fill="#f0f0f0" stroke="#858585" />
                <path d="M1.500 1.500h5v5h-5zM2.500 0v2M5.500 0v2M4.500 7v8h3" fill="#eee" stroke="#666" />
            </svg>
            <time className="w-[76px] text-center leading-4">01:18<br />06/11/2020</time>
            <svg width="16" height="14" viewBox="0 0 16 14">
                <path d="M1 0h15v10H1z" fill="#1d57b0" />
                <path d="M1 0h15L4 10H1z" fill="#4f8edd" />
                <path d="M0 11h16v2H0z" fill="#bdc3cc" />
            </svg>
        </div>
    </footer>
);

export default function App() {
    return (
        <div className="flex min-h-screen flex-col bg-[#bfdbff] font-['Open_Sans','Noto_Sans',sans-serif] text-[11px] leading-[15px]">
            <div className="relative">
                <TitleBar />
                <RibbonTabs />
                {/* The round menu button hangs over both rows */}
                <button type="button" aria-label="Office menu" className="absolute top-[3px] left-[3px]">
                    <OfficeOrb />
                </button>
            </div>
            <Ribbon />
            <div className="h-[2px] bg-[#9dbbe3]" />
            <div className="flex grow border-t border-[#6593cf]">
                <div className="w-1 border-r border-[#6593cf] bg-[#8ba9d7]" />
                <NavPane />
                <div className="w-[6px] shrink-0 border-x border-[#6593cf] bg-[#a9cbf5]" />
                <Document />
            </div>
            <StatusBar />
            <Taskbar />
        </div>
    );
}
